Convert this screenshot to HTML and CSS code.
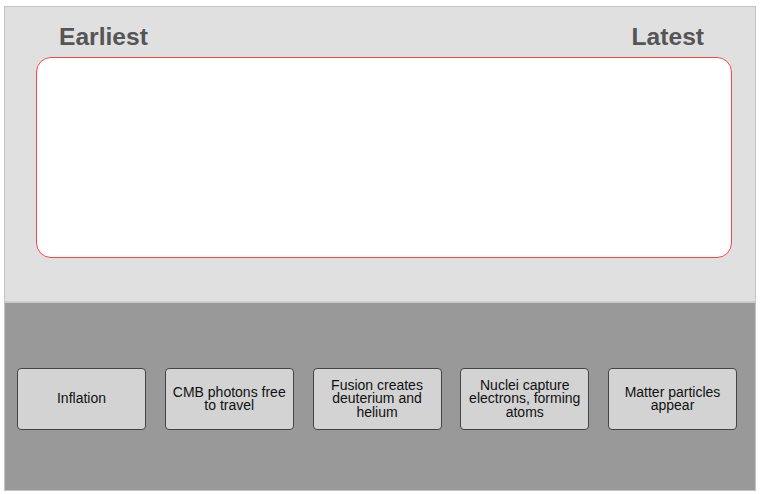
FILE: index.html
```html
<!DOCTYPE html>
<html lang="en">

<head>
    <meta charset="UTF-8">
    <meta name="viewport" content="width=device-width, initial-scale=1.0">
    <title>Timeline</title>
    <link rel="stylesheet" href="styles.css">
</head>

<body>
    <div id="outer">
        <div class="top">
            <div class="labels">
                <span>Earliest</span>
                <span>Latest</span>
            </div>
            <div class="drop"></div>
        </div>
        <div class="bottom">
            <ul class="cards">
                <li>Inflation</li>
                <li>CMB photons free to travel</li>
                <li>Fusion creates deuterium and helium</li>
                <li>Nuclei capture electrons, forming atoms</li>
                <li>Matter particles appear</li>
            </ul>
        </div>
    </div>
</body>

</html>
```

FILE: styles.css
```css
* {
    margin: 0;
    padding: 0;
    box-sizing: border-box;
    list-style-type: none;
}

body {
    margin: 6px 5px 0 4px;
    font-family: "Liberation Sans", Arial, sans-serif;
}

#outer {
    width: 752px;
    height: 485px;
    border: 1px solid #c4c4c4;
    display: flex;
    flex-direction: column;
}

.top {
    height: 294px;
    background-color: #e0e0e0;
    padding-top: 16px;
}

.labels {
    display: flex;
    justify-content: space-between;
    padding: 0 51px 0 54px;
    font-size: 24.6px;
    line-height: 28px;
    font-weight: bold;
    color: #555;
}

.drop {
    margin: 6px 23px 0 31px;
    height: 201px;
    background-color: #fff;
    border: 1px solid #f44;
    border-radius: 15px;
}

.bottom {
    flex: 1;
    background-color: #999;
    border-top: 2px solid #ccc;
    padding: 65px 0 0 12px;
}

.cards {
    display: flex;
    gap: 18.75px;
}

.cards li {
    width: 129px;
    height: 62px;
    padding: 0 3px;
    background-color: #d3d3d3;
    border: 1px solid #444;
    border-radius: 4px;
    display: flex;
    align-items: center;
    justify-content: center;
    text-align: center;
    font-size: 14px;
    line-height: 13.5px;
    color: #111;
}
```
